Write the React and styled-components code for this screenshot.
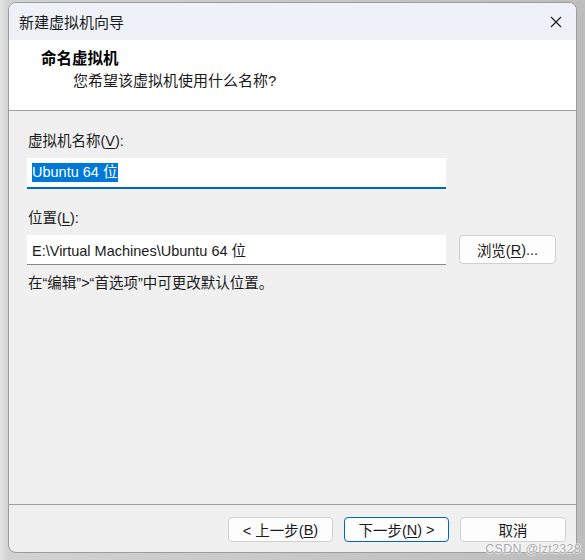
import React from "react";
import styled, { createGlobalStyle } from "styled-components";

const GlobalStyle = createGlobalStyle`
  html, body {
    margin: 0;
    padding: 0;
  }
  body {
    width: 585px;
    height: 560px;
    overflow: hidden;
    background: linear-gradient(to right, #e4e4e4 0px, #d2d2d2 8px, #c8c8c8 50%, #bdbdbd 100%);
    font-family: "Liberation Sans", "Noto Sans CJK SC", sans-serif;
    color: #1a1a1a;
  }
`;

const Stage = styled.div`
  position: relative;
  box-sizing: border-box;
  width: 585px;
  height: 560px;
  padding: 2px 8px 0 8px;
`;

const Window = styled.div`
  box-sizing: border-box;
  width: 569px;
  height: 551px;
  border: 1px solid #9c9c9c;
  border-radius: 8px;
  overflow: hidden;
  display: flex;
  flex-direction: column;
  background: #f0f0f0;
`;

const TitleBar = styled.div`
  height: 37px;
  flex: none;
  display: flex;
  align-items: center;
  justify-content: space-between;
  padding: 0 14px 0 10px;
  background: #eef2f8;
  font-size: 15px;
  color: #1a1a1a;
`;

const CloseIcon = styled.svg`
  width: 12px;
  height: 12px;
  display: block;
`;

const Header = styled.div`
  height: 71px;
  flex: none;
  box-sizing: border-box;
  background: #ffffff;
  border-bottom: 1px solid #a0a0a0;
  padding: 8px 0 0 32px;
`;

const HeaderTitle = styled.div`
  font-size: 15.5px;
  font-weight: 700;
  line-height: 22px;
  color: #000;
`;

const HeaderSub = styled.div`
  margin-left: 32px;
  font-size: 15px;
  line-height: 22px;
  color: #1a1a1a;
`;

const Body = styled.div`
  flex: 1;
  display: flex;
  flex-direction: column;
  padding: 20px 0 0 18px;
  border-bottom: 1px solid #a0a0a0;
`;

const Label = styled.div`
  padding-left: 1px;
  font-size: 14.5px;
  line-height: 20px;
  margin-top: ${(p) => p.$top || 0}px;
  margin-bottom: 7px;
`;

const U = styled.span`
  text-decoration: underline;
  text-underline-offset: 2px;
`;

const TextField = styled.div`
  box-sizing: border-box;
  width: ${(p) => p.$width}px;
  height: ${(p) => p.$height}px;
  background: #ffffff;
  border-bottom: ${(p) => (p.$focused ? "2px solid #0067c0" : "1px solid #8a8a8a")};
  display: flex;
  align-items: center;
  padding-left: 5px;
  font-size: 14.5px;
  white-space: nowrap;
`;

const Selected = styled.span`
  background: #0078d7;
  color: #ffffff;
  line-height: 19px;
  padding-right: 1px;
`;

const Row = styled.div`
  display: flex;
  align-items: flex-start;
  gap: 13px;
`;

const Button = styled.button`
  box-sizing: border-box;
  width: ${(p) => p.$width}px;
  height: ${(p) => p.$height}px;
  background: #fdfdfd;
  border: 1px solid ${(p) => (p.$primary ? "#0067c0" : "#d0d0d0")};
  border-radius: 4px;
  font-family: "Liberation Sans", "Noto Sans CJK SC", sans-serif;
  font-size: 14.5px;
  color: #1a1a1a;
  padding: 0;
  display: flex;
  align-items: center;
  justify-content: center;
`;

const Note = styled.div`
  margin-top: 8px;
  padding-left: 1px;
  font-size: 14.5px;
  line-height: 20px;
`;

const Footer = styled.div`
  height: 47px;
  flex: none;
  box-sizing: border-box;
  display: flex;
  justify-content: flex-end;
  align-items: flex-start;
  gap: 11px;
  padding: 12px 10px 0 0;
`;

const Watermark = styled.div`
  position: absolute;
  right: 4px;
  bottom: 4px;
  font-family: "Liberation Sans", sans-serif;
  font-size: 12.5px;
  color: #a8a8a8;
  text-shadow: 0 0 1px #ffffff, 0 0 2px #ffffff, 0 0 2px #ffffff;
  letter-spacing: 0.3px;
`;

export default function App() {
  return (
    <>
      <GlobalStyle />
      <Stage>
        <Window>
          <TitleBar>
            <span>新建虚拟机向导</span>
            <CloseIcon viewBox="0 0 12 12">
              <path d="M1 1 L11 11 M11 1 L1 11" stroke="#1a1a1a" strokeWidth="1.1" fill="none" />
            </CloseIcon>
          </TitleBar>
          <Header>
            <HeaderTitle>命名虚拟机</HeaderTitle>
            <HeaderSub>您希望该虚拟机使用什么名称?</HeaderSub>
          </Header>
          <Body>
            <Label>
              虚拟机名称(<U>V</U>):
            </Label>
            <TextField $width={419} $height={31} $focused>
              <Selected>Ubuntu 64 位</Selected>
            </TextField>
            <Label $top={19}>
              位置(<U>L</U>):
            </Label>
            <Row>
              <TextField $width={419} $height={30}>
                E:\Virtual Machines\Ubuntu 64 位
              </TextField>
              <Button $width={97} $height={29}>
                浏览(<U>R</U>)...
              </Button>
            </Row>
            <Note>在“编辑”&gt;“首选项”中可更改默认位置。</Note>
          </Body>
          <Footer>
            <Button $width={105} $height={25}>
              &lt; 上一步(<U>B</U>)
            </Button>
            <Button $width={105} $height={25} $primary>
              下一步(<U>N</U>) &gt;
            </Button>
            <Button $width={106} $height={25}>
              取消
            </Button>
          </Footer>
        </Window>
        <Watermark>CSDN @lzt2328</Watermark>
      </Stage>
    </>
  );
}
